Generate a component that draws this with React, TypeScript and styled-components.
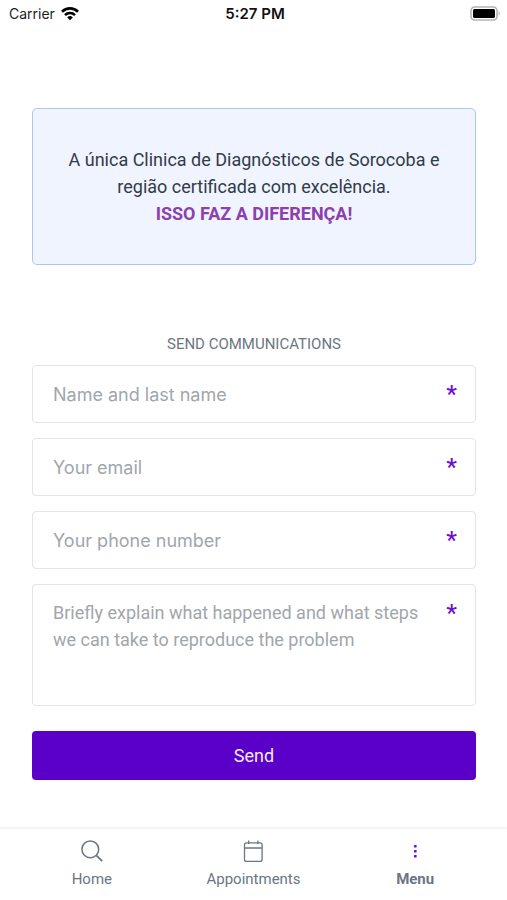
import React from "react";
import styled, { createGlobalStyle } from "styled-components";

const colors = {
  purple: "#5b00c9",
  star: "#700fd2",
  slate: "#6b7682",
  placeholder: "#a1a6ac",
  line: "#e4e4e6",
};

const GlobalStyle = createGlobalStyle`
  *, *::before, *::after { box-sizing: border-box; }
  body {
    margin: 0;
    background: #fff;
    font-family: Roboto, sans-serif;
  }
`;

const Screen = styled.div`
  display: flex;
  flex-direction: column;
  min-height: 100vh;
  background: #fff;
`;

const StatusBar = styled.header`
  display: grid;
  grid-template-columns: 1fr auto 1fr;
  align-items: center;
  height: 27px;
  padding: 0 6px 0 9px;
  font: 400 14px/20px Inter, sans-serif;
  color: #222;
`;

const Carrier = styled.div`
  display: flex;
  align-items: center;
  gap: 6px;
`;

const Clock = styled.time`
  font-size: 15px;
  font-weight: 600;
  color: #111;
`;

const Battery = styled.svg`
  justify-self: end;
`;

const Content = styled.main`
  flex: 1;
  display: flex;
  flex-direction: column;
  padding: 81px 31px 48px 32px;
`;

const Notice = styled.p`
  margin: 0;
  padding: 37px 24px;
  border: 1px solid #a9c9ea;
  border-radius: 5px;
  background: #eff4fe;
  text-align: center;
  font-size: 18px;
  line-height: 27px;
  color: #323b48;
`;

const Highlight = styled.strong`
  display: block;
  font-weight: 700;
  color: #8c3fad;
`;

const Form = styled.form`
  display: flex;
  flex-direction: column;
  gap: 15px;
  margin-top: 69px;
`;

const FormTitle = styled.h2`
  margin: 0 0 -4px;
  text-align: center;
  font-size: 15px;
  font-weight: 400;
  line-height: 20px;
  color: ${colors.slate};
`;

const Field = styled.label`
  display: flex;
  align-items: flex-start;
  gap: 16px;
  padding: 14px 18px 14px 20px;
  border: 1px solid ${colors.line};
  border-radius: 4px;
  background: #fff;
`;

const controlStyle = `
  flex: 1;
  min-width: 0;
  margin: 0;
  padding: 0;
  border: 0;
  outline: 0;
  background: transparent;
  color: #323b48;
  font-size: 18px;
  line-height: 27px;
  &::placeholder { color: ${colors.placeholder}; opacity: 1; }
`;

const TextInput = styled.input`
  ${controlStyle}
  height: 28px;
  font-family: Inter, sans-serif;
`;

const TextArea = styled.textarea`
  ${controlStyle}
  height: 92px;
  resize: none;
  overflow: hidden;
  font-family: Roboto, sans-serif;
`;

const Required = styled.span`
  font-size: 24px;
  font-weight: 500;
  line-height: 28px;
  height: 28px;
  color: ${colors.star};
`;

const SendButton = styled.button`
  height: 49px;
  margin-top: 10px;
  border: 0;
  border-radius: 4px;
  background: ${colors.purple};
  color: #f6e9ff;
  font: 400 18px/27px Roboto, sans-serif;
`;

const TabBar = styled.nav`
  display: grid;
  grid-template-columns: repeat(3, 1fr);
  padding: 9px 11px 11px;
  background: #fff;
  border-top: 1px solid #f2f2f2;
  box-shadow: 0 -1px 2px rgba(0, 0, 0, 0.05);
`;

const Tab = styled.a<{ $active?: boolean }>`
  display: flex;
  flex-direction: column;
  align-items: center;
  gap: 5px;
  font-size: 15px;
  line-height: 20px;
  font-weight: ${(p) => (p.$active ? 700 : 400)};
  color: ${colors.slate};
  text-decoration: none;
`;

const fields = [
  { name: "name", type: "text", label: "Name and last name" },
  { name: "email", type: "email", label: "Your email" },
  { name: "phone", type: "tel", label: "Your phone number" },
];

const WifiIcon = () => (
  <svg width="18" height="14" viewBox="0 0 18 14" fill="none" stroke="#000" strokeWidth="2.6" aria-hidden="true">
    <path d="M1 4.7a11.4 11.4 0 0 1 16 0" />
    <path d="M4 8.1a7.1 7.1 0 0 1 10 0" />
    <path d="M9 13.2 6.2 10.4a4 4 0 0 1 5.6 0z" fill="#000" stroke="none" />
  </svg>
);

const BatteryIcon = () => (
  <Battery width="31" height="15" viewBox="0 0 31 15" role="img" aria-label="Battery full">
    <rect x="1" y="1" width="26" height="13" rx="3.5" fill="#fff" stroke="#b5b5b5" strokeWidth="1.6" />
    <rect x="3" y="3" width="22" height="9" rx="1.5" fill="#000" />
    <path d="M28.6 5.3v4.4c1.6-.5 1.6-3.9 0-4.4z" fill="#b5b5b5" />
  </Battery>
);

const SearchIcon = () => (
  <svg width="24" height="26" viewBox="0 0 24 26" fill="none" stroke={colors.slate} strokeWidth="1.5" aria-hidden="true">
    <circle cx="10.3" cy="11.3" r="8.4" />
    <path d="m16.3 17.3 5.9 5.9" strokeWidth="1.9" />
  </svg>
);

const CalendarIcon = () => (
  <svg width="24" height="26" viewBox="0 0 24 26" fill="none" stroke={colors.slate} strokeWidth="1.3" aria-hidden="true">
    <rect x="3.5" y="4.8" width="17.6" height="18.6" rx="2" />
    <path d="M3.5 10h17.6M7.7 2.4v3.6M16.9 2.4v3.6" />
  </svg>
);

const DotsIcon = () => (
  <svg width="24" height="26" viewBox="0 0 24 26" fill={colors.star} aria-hidden="true">
    <rect x="11" y="7" width="2.6" height="2.6" rx=".5" />
    <rect x="11" y="12" width="2.6" height="2.6" rx=".5" />
    <rect x="11" y="17" width="2.6" height="2.6" rx=".5" />
  </svg>
);

export default function App() {
  return (
    <Screen>
      <GlobalStyle />
      <StatusBar>
        <Carrier>
          Carrier <WifiIcon />
        </Carrier>
        <Clock>5:27 PM</Clock>
        <BatteryIcon />
      </StatusBar>
      <Content>
        <Notice>
          A única Clinica de Diagnósticos de Sorocoba e região certificada com excelência.
          <Highlight>ISSO FAZ A DIFERENÇA!</Highlight>
        </Notice>
        <Form onSubmit={(e) => e.preventDefault()}>
          <FormTitle>SEND COMMUNICATIONS</FormTitle>
          {fields.map((f) => (
            <Field key={f.name}>
              <TextInput name={f.name} type={f.type} placeholder={f.label} aria-label={f.label} required />
              <Required aria-hidden="true">*</Required>
            </Field>
          ))}
          <Field>
            <TextArea
              name="message"
              placeholder="Briefly explain what happened and what steps we can take to reproduce the problem"
              aria-label="Problem description"
              required
            />
            <Required aria-hidden="true">*</Required>
          </Field>
          <SendButton type="submit">Send</SendButton>
        </Form>
      </Content>
      <TabBar>
        <Tab href="#home">
          <SearchIcon />
          Home
        </Tab>
        <Tab href="#appointments">
          <CalendarIcon />
          Appointments
        </Tab>
        <Tab href="#menu" $active aria-current="page">
          <DotsIcon />
          Menu
        </Tab>
      </TabBar>
    </Screen>
  );
}
